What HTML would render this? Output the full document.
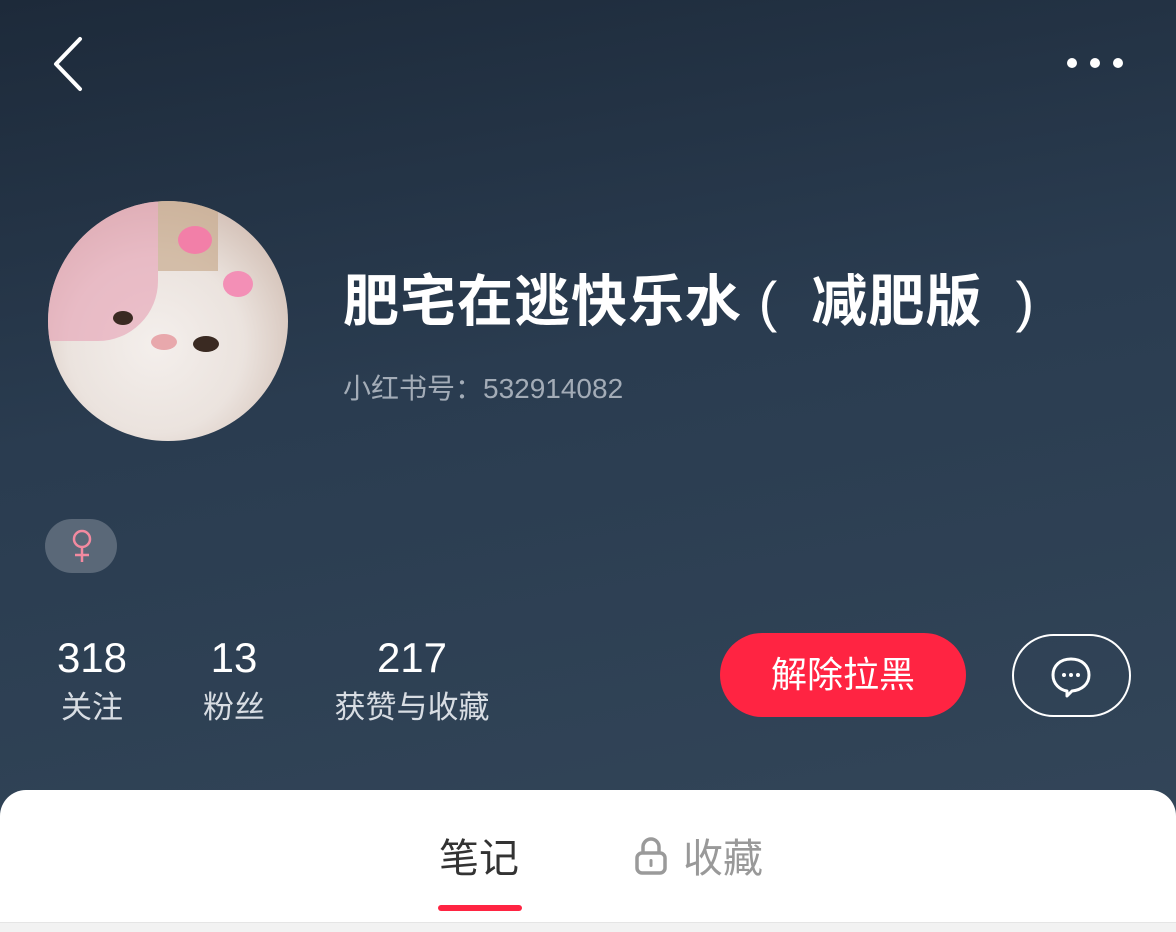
<!DOCTYPE html>
<html><head><meta charset="utf-8"><style>
*{margin:0;padding:0;box-sizing:border-box}
body{width:1176px;height:932px;overflow:hidden;font-family:"Liberation Sans","Noto Sans CJK SC",sans-serif;background:linear-gradient(170deg,#1d2a3a 0%,#2a3c50 40%,#34475a 100%);position:relative;color:#fff}
.abs{position:absolute}
.avatar{left:48px;top:201px;width:240px;height:240px;border-radius:50%;background:radial-gradient(circle at 45% 60%,#f4efec 0%,#ebe3de 45%,#d9c9c0 70%,#c8a9a0 100%);overflow:hidden}
.t{white-space:nowrap}
.stat{text-align:center;position:absolute}
.num{font-size:42px;line-height:48px;color:#fff}
.lab{font-size:31px;line-height:40px;color:#d8dde3;margin-top:6px}
</style></head><body>
<svg class="abs" style="left:50px;top:36px" width="34" height="56" viewBox="0 0 34 56"><path d="M30 3 L6 28 L30 53" fill="none" stroke="#fff" stroke-width="4" stroke-linecap="round" stroke-linejoin="round"/></svg>
<div class="abs" style="left:1067px;top:58px;width:10px;height:10px;border-radius:50%;background:#fff"></div>
<div class="abs" style="left:1090px;top:58px;width:10px;height:10px;border-radius:50%;background:#fff"></div>
<div class="abs" style="left:1113px;top:58px;width:10px;height:10px;border-radius:50%;background:#fff"></div>
<div class="abs avatar">
<div class="abs" style="left:0;top:0;width:110px;height:140px;background:#e6a0b4;opacity:.6;border-radius:0 0 60px 0"></div>
<div class="abs" style="left:110px;top:0;width:60px;height:70px;background:#c9ad90;opacity:.7"></div>
<div class="abs" style="left:130px;top:25px;width:34px;height:28px;background:#f27fa8;border-radius:50%"></div>
<div class="abs" style="left:175px;top:70px;width:30px;height:26px;background:#f38fb6;border-radius:50%"></div>
<div class="abs" style="left:65px;top:110px;width:20px;height:14px;background:#3a2a22;border-radius:50%"></div>
<div class="abs" style="left:145px;top:135px;width:26px;height:16px;background:#3a2a22;border-radius:50%"></div>
<div class="abs" style="left:103px;top:133px;width:26px;height:16px;background:#e8a8ac;border-radius:50%"></div>
</div>
<div class="abs t" style="left:343px;top:266px;font-size:56px;font-weight:bold;line-height:72px;white-space:pre;letter-spacing:1px">肥宅在逃快乐水 <span style="font-weight:normal">(</span>  减肥版  <span style="font-weight:normal">)</span></div>
<div class="abs t" style="left:343px;top:371px;font-size:28px;color:#a3acb7;line-height:36px">小红书号：532914082</div>
<div class="abs" style="left:45px;top:519px;width:72px;height:54px;border-radius:27px;background:#5a6878"></div>
<svg class="abs" style="left:68px;top:528px" width="28" height="36" viewBox="0 0 28 36"><circle cx="14" cy="11" r="8" fill="none" stroke="#f28aa0" stroke-width="2.5"/><path d="M14 19V34M7 27H21" stroke="#f28aa0" stroke-width="2.5"/></svg>
<div class="stat" style="left:52px;width:80px;top:634px"><div class="num">318</div><div class="lab">关注</div></div>
<div class="stat" style="left:194px;width:80px;top:634px"><div class="num">13</div><div class="lab">粉丝</div></div>
<div class="stat" style="left:322px;width:180px;top:634px"><div class="num">217</div><div class="lab">获赞与收藏</div></div>
<div class="abs" style="left:720px;top:633px;width:246px;height:84px;border-radius:42px;background:#ff2442;text-align:center;line-height:84px;font-size:36px">解除拉黑</div>
<div class="abs" style="left:1012px;top:634px;width:119px;height:83px;border-radius:42px;border:2px solid #fff"></div>
<svg class="abs" style="left:1048px;top:655px" width="46" height="44" viewBox="0 0 46 44"><path d="M23 4C12 4 5 11 5 20c0 9 7 15 14 16l0 5 5-5c10-1 17-7 17-16C41 11 34 4 23 4Z" fill="none" stroke="#fff" stroke-width="3" stroke-linejoin="round"/><circle cx="16" cy="20" r="2" fill="#fff"/><circle cx="23" cy="20" r="2" fill="#fff"/><circle cx="30" cy="20" r="2" fill="#fff"/></svg>
<div class="abs" style="left:0;top:790px;width:1176px;height:142px;background:#fff;border-radius:26px 26px 0 0"></div>
<div class="abs t" style="left:439px;top:834px;font-size:40px;line-height:50px;color:#333">笔记</div>
<div class="abs" style="left:438px;top:905px;width:84px;height:6px;border-radius:3px;background:#ff2442"></div>
<svg class="abs" style="left:634px;top:836px" width="34" height="40" viewBox="0 0 34 40"><path d="M9 17V11a8 8 0 0 1 16 0v6" fill="none" stroke="#9a9a9a" stroke-width="3.5"/><rect x="3" y="17" width="28" height="20" rx="5" fill="none" stroke="#9a9a9a" stroke-width="3.5"/><rect x="15.5" y="23" width="3" height="8" rx="1.5" fill="#9a9a9a"/></svg>
<div class="abs t" style="left:683px;top:834px;font-size:40px;line-height:50px;color:#999">收藏</div>
<div class="abs" style="left:0;top:922px;width:1176px;height:10px;background:#f2f2f2;border-top:1px solid #e5e5e5"></div>
</body></html>
